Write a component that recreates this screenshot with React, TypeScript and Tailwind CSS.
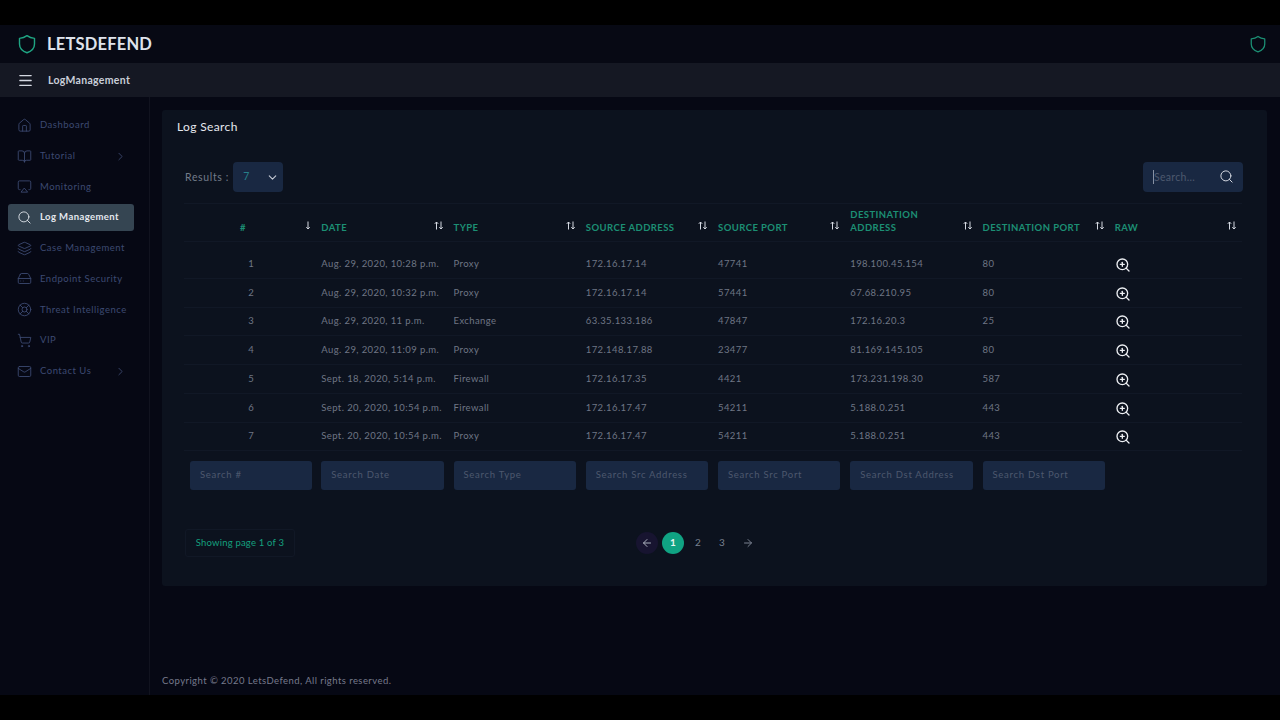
import { useState } from "react"
import {
  Airplay,
  ArrowLeft,
  ArrowRight,
  BookOpen,
  ChevronDown,
  ChevronRight,
  HardDrive,
  Home,
  Layers,
  LifeBuoy,
  Mail,
  Menu,
  Search,
  ShoppingCart,
  ZoomIn,
} from "lucide-react"

const navItems = [
  { label: "Dashboard", icon: Home },
  { label: "Tutorial", icon: BookOpen, more: true },
  { label: "Monitoring", icon: Airplay },
  { label: "Log Management", icon: Search, active: true },
  { label: "Case Management", icon: Layers },
  { label: "Endpoint Security", icon: HardDrive },
  { label: "Threat Intelligence", icon: LifeBuoy },
  { label: "VIP", icon: ShoppingCart },
  { label: "Contact Us", icon: Mail, more: true },
]

const rows = [
  ["1", "Aug. 29, 2020, 10:28 p.m.", "Proxy", "172.16.17.14", "47741", "198.100.45.154", "80"],
  ["2", "Aug. 29, 2020, 10:32 p.m.", "Proxy", "172.16.17.14", "57441", "67.68.210.95", "80"],
  ["3", "Aug. 29, 2020, 11 p.m.", "Exchange", "63.35.133.186", "47847", "172.16.20.3", "25"],
  ["4", "Aug. 29, 2020, 11:09 p.m.", "Proxy", "172.148.17.88", "23477", "81.169.145.105", "80"],
  ["5", "Sept. 18, 2020, 5:14 p.m.", "Firewall", "172.16.17.35", "4421", "173.231.198.30", "587"],
  ["6", "Sept. 20, 2020, 10:54 p.m.", "Firewall", "172.16.17.47", "54211", "5.188.0.251", "443"],
  ["7", "Sept. 20, 2020, 10:54 p.m.", "Proxy", "172.16.17.47", "54211", "5.188.0.251", "443"],
]

const columns = ["#", "DATE", "TYPE", "SOURCE ADDRESS", "SOURCE PORT", "DESTINATION ADDRESS", "DESTINATION PORT", "RAW"]

const filters = [
  "Search #",
  "Search Date",
  "Search Type",
  "Search Src Address",
  "Search Src Port",
  "Search Dst Address",
  "Search Dst Port",
]

function SortIcon({ downOnly }: { downOnly?: boolean }) {
  return (
    <svg width="10" height="9" viewBox="0 0 10 9" fill="none" stroke="#d5d9e2" strokeWidth="1">
      {!downOnly && <path d="M2.5 8.5V1M0.8 2.8 2.5 1 4.2 2.8" />}
      <path d="M7 0.5V8M5.3 6.2 7 8 8.7 6.2" />
    </svg>
  )
}

function ShieldMark({ className }: { className: string }) {
  return (
    <svg viewBox="0 0 24 24" fill="none" stroke="currentColor" strokeWidth="1.7" strokeLinejoin="round" className={className}>
      <path d="M12 2C14.6 4 17.6 5 21 5.2V12C21 17 17.4 20.6 12 22.5C6.6 20.6 3 17 3 12V5.2C6.4 5 9.4 4 12 2Z" />
    </svg>
  )
}

export default function App() {
  const [results] = useState("7")

  return (
    <div className="flex h-[720px] w-[1280px] flex-col overflow-hidden bg-black pt-[25px] pb-[25px] font-['Lato',sans-serif]">
      <header className="flex h-[38px] items-center justify-between bg-[#070914] pr-[13px] pl-[17px]">
        <div className="flex items-center gap-[10px]">
          <ShieldMark className="h-[20px] w-[20px] text-[#1fa583]" />
          <span className="text-[16.5px] font-bold tracking-[0.2px] text-[#dfe3ec]">LETSDEFEND</span>
        </div>
        <ShieldMark className="h-[18px] w-[18px] text-[#1c8f74]" />
      </header>

      <div className="flex h-[34px] items-center gap-[14.5px] bg-[#151823] pl-[16.5px]">
        <Menu className="h-[17px] w-[17px] text-[#d5d9e2]" strokeWidth={1.8} />
        <span className="pt-[1px] text-[10.5px] font-bold tracking-[0.3px] text-[#c9ced9]">LogManagement</span>
      </div>

      <div className="flex flex-1 bg-[#060814]">
        <aside className="flex w-[150px] flex-col gap-[3.7px] border-r border-[#11131f] pt-[15px] pr-[15px] pl-[8px]">
          {navItems.map((item) => (
            <div
              key={item.label}
              className={
                item.active
                  ? "flex h-[27px] items-center rounded-[3px] bg-[#354552] pr-[7px] pl-[9px] text-[#e4e8ee]"
                  : "flex h-[27px] items-center pr-[7px] pl-[9px] text-[#3d4a72]"
              }
            >
              <item.icon className="h-[15px] w-[15px] shrink-0" strokeWidth={1.4} />
              <span className={item.active ? "ml-[8px] flex-1 text-[9.5px] font-bold tracking-[0.42px] whitespace-nowrap" : "ml-[8px] flex-1 text-[9.5px] tracking-[0.5px] whitespace-nowrap"}>
                {item.label}
              </span>
              {item.more && <ChevronRight className="h-[13px] w-[13px]" strokeWidth={1.6} />}
            </div>
          ))}
        </aside>

        <main className="flex flex-1 flex-col pt-[13px] pr-[13px] pl-[12px]">
          <section className="h-[476px] rounded-[3px] bg-[#0c121e] pt-[9px] pr-[24px] pl-[15px]">
            <h1 className="text-[12px] leading-[16px] tracking-[0.36px] text-[#e6e9ef]">Log Search</h1>

            <div className="mt-[27px] flex h-[30px] items-center justify-between pl-[8px]">
              <div className="flex items-center gap-[4px]">
                <span className="pt-[1px] text-[10.5px] tracking-[0.65px] text-[#737b8a]">Results :</span>
                <div className="flex h-[30px] w-[50px] items-center justify-between rounded-[4px] bg-[#192842] pr-[4px] pl-[10px] text-[10.5px] text-[#27808a]">
                  {results}
                  <ChevronDown className="h-[13px] w-[13px] text-[#c6cbd6]" />
                </div>
              </div>
              <div className="flex h-[30px] w-[100px] items-center justify-between rounded-[4px] bg-[#192842] pr-[9px] pl-[10px]">
                <span className="border-l border-[#8791a3] text-[10.5px] leading-[14px] tracking-[0.3px] text-[#4d586e]">Search...</span>
                <Search className="mb-[1px] h-[15px] w-[15px] text-[#d5d9e2]" strokeWidth={1.6} />
              </div>
            </div>

            <table className="mt-[11px] ml-[7px] w-[1058px] table-fixed border-collapse text-[9.5px] tracking-[0.4px] text-[#6f7685]">
              <thead>
                <tr className="h-[38px] border-y border-[#111826] text-left">
                  {columns.map((col, i) => (
                    <th key={col} className="relative pr-[24px] pb-[4px] pl-[5px] align-middle text-[9.5px] leading-[13px] font-bold tracking-[0.43px] text-[#1c8f74]">
                      <span className={i === 0 ? "block pt-[13px] pl-[51px]" : col === "DESTINATION ADDRESS" ? "block" : "block pt-[13px]"}>{col}</span>
                      <span className="absolute top-[17px] right-[5px]">
                        <SortIcon downOnly={i === 0} />
                      </span>
                    </th>
                  ))}
                </tr>
              </thead>
              <tbody>
                <tr className="h-[8px]" />
                {rows.map((row) => (
                  <tr key={row[0]} className="h-[28.75px] border-b border-[#111826]">
                    {row.map((cell, i) => (
                      <td key={i} className={i === 0 ? "pl-[6px] pr-[4px] text-center whitespace-nowrap" : "px-[5px] whitespace-nowrap"}>
                        {cell}
                      </td>
                    ))}
                    <td className="px-[5px]">
                      <ZoomIn className="mt-[2px] h-[16px] w-[16px] text-[#eef0f4]" strokeWidth={2} />
                    </td>
                  </tr>
                ))}
                <tr className="h-[48px]">
                  {filters.map((f, i) => (
                    <td key={f} className={i === 0 ? "pr-[4px] pl-[6px] align-middle" : "px-[5px] align-middle"}>
                      <div className="flex h-[29px] items-center rounded-[3px] bg-[#192842] pt-[1px] pl-[10px] text-[9.5px] tracking-[0.72px] whitespace-nowrap text-[#4d586e]">{f}</div>
                    </td>
                  ))}
                  <td />
                </tr>
              </tbody>
            </table>

            <div className="relative mt-[30px] ml-[8px] flex h-[28px] items-center">
              <div className="flex h-[28px] w-[110px] items-center justify-center rounded-[3px] border border-[#111826] text-[9.5px] tracking-[0.2px] text-[#14a07e]">
                Showing page 1 of 3
              </div>
              <div className="ml-[341px] flex items-center text-[10px] text-[#7a8190]">
                <span className="flex h-[22px] w-[22px] items-center justify-center rounded-full bg-[#171430]">
                  <ArrowLeft className="h-[12px] w-[12px] text-[#a9aebb]" />
                </span>
                <span className="ml-[4px] flex h-[22px] w-[22px] items-center justify-center rounded-full bg-[#10a383] font-bold text-[#e8f5f1]">1</span>
                <span className="flex h-[22px] w-[25px] items-center justify-center pl-[3px]">2</span>
                <span className="flex h-[22px] w-[25px] items-center justify-center pl-[1px]">3</span>
                <span className="flex h-[22px] w-[26px] items-center justify-center pl-[2px]">
                  <ArrowRight className="h-[12px] w-[12px]" />
                </span>
              </div>
            </div>
          </section>

          <footer className="mt-auto pb-[7px] text-[9.5px] tracking-[0.44px] text-[#767a8c]">Copyright © 2020 LetsDefend, All rights reserved.</footer>
        </main>
      </div>
    </div>
  )
}
